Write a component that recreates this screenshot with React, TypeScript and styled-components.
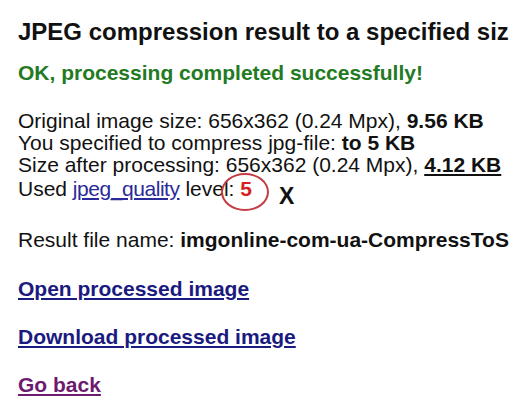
import React from "react";
import styled, { createGlobalStyle } from "styled-components";

const Global = createGlobalStyle`
  html, body { margin: 0; padding: 0; background: #fff; }
  body { width: 509px; height: 404px; overflow: hidden; font-family: "Liberation Sans", Arial, sans-serif; color: #111; }
`;

const Page = styled.div`
  padding: 18px 0 0 18px;
  white-space: nowrap;
  overflow: hidden;
  width: 491px;
  height: 386px;
`;

const Title = styled.h1`
  margin: 0;
  font-size: 24px;
  font-weight: bold;
  line-height: 28px;
  color: #111;
`;

const Success = styled.div`
  margin-top: 15px;
  font-size: 21px;
  font-weight: bold;
  line-height: 24px;
  color: #237a23;
`;

const Info = styled.div`
  margin-top: 25px;
  font-size: 21px;
  line-height: 22.2px;
`;

const Line = styled.div``;

const Strong = styled.b<{ $underline?: boolean }>`
  text-decoration: ${(p) => (p.$underline ? "underline" : "none")};
`;

const InlineLink = styled.a`
  color: #2a2a9a;
  text-decoration: underline;
  letter-spacing: -0.45px;
`;

const Quality = styled.span`
  position: relative;
  color: #d42020;
  font-weight: bold;
`;

const Ring = styled.span`
  position: absolute;
  left: -19px;
  top: -4px;
  width: 48px;
  height: 38px;
  border: 2px solid #c43c44;
  border-radius: 50%;
  box-sizing: border-box;
  pointer-events: none;
`;

const Mark = styled.span`
  font-weight: bold;
  font-size: 23px;
  margin-left: 27px;
  position: relative;
  top: 8px;
`;

const Para = styled.div<{ $gap: number }>`
  margin-top: ${(p) => p.$gap}px;
  font-size: 21px;
  line-height: 24px;
`;

const BigLink = styled.a<{ $visited?: boolean }>`
  font-weight: bold;
  color: ${(p) => (p.$visited ? "#6e1a6e" : "#1a1a80")};
  text-decoration: underline;
`;

export default function App() {
  return (
    <>
      <Global />
      <Page>
        <Title>JPEG compression result to a specified size</Title>
        <Success>OK, processing completed successfully!</Success>
        <Info>
          <Line>
            Original image size: 656x362 (0.24 Mpx), <Strong>9.56 KB</Strong>
          </Line>
          <Line>
            You specified to compress jpg-file: <Strong>to 5 KB</Strong>
          </Line>
          <Line>
            Size after processing: 656x362 (0.24 Mpx), <Strong $underline>4.12 KB</Strong>
          </Line>
          <Line>
            Used <InlineLink href="#">jpeg_quality</InlineLink> level:{" "}
            <Quality>
              5
              <Ring />
            </Quality>
            <Mark>X</Mark>
          </Line>
        </Info>
        <Para $gap={28}>
          Result file name: <Strong>imgonline-com-ua-CompressToSize-result.jpg</Strong>
        </Para>
        <Para $gap={25}>
          <BigLink href="#">Open processed image</BigLink>
        </Para>
        <Para $gap={24}>
          <BigLink href="#">Download processed image</BigLink>
        </Para>
        <Para $gap={24}>
          <BigLink href="#" $visited>Go back</BigLink>
        </Para>
      </Page>
    </>
  );
}
